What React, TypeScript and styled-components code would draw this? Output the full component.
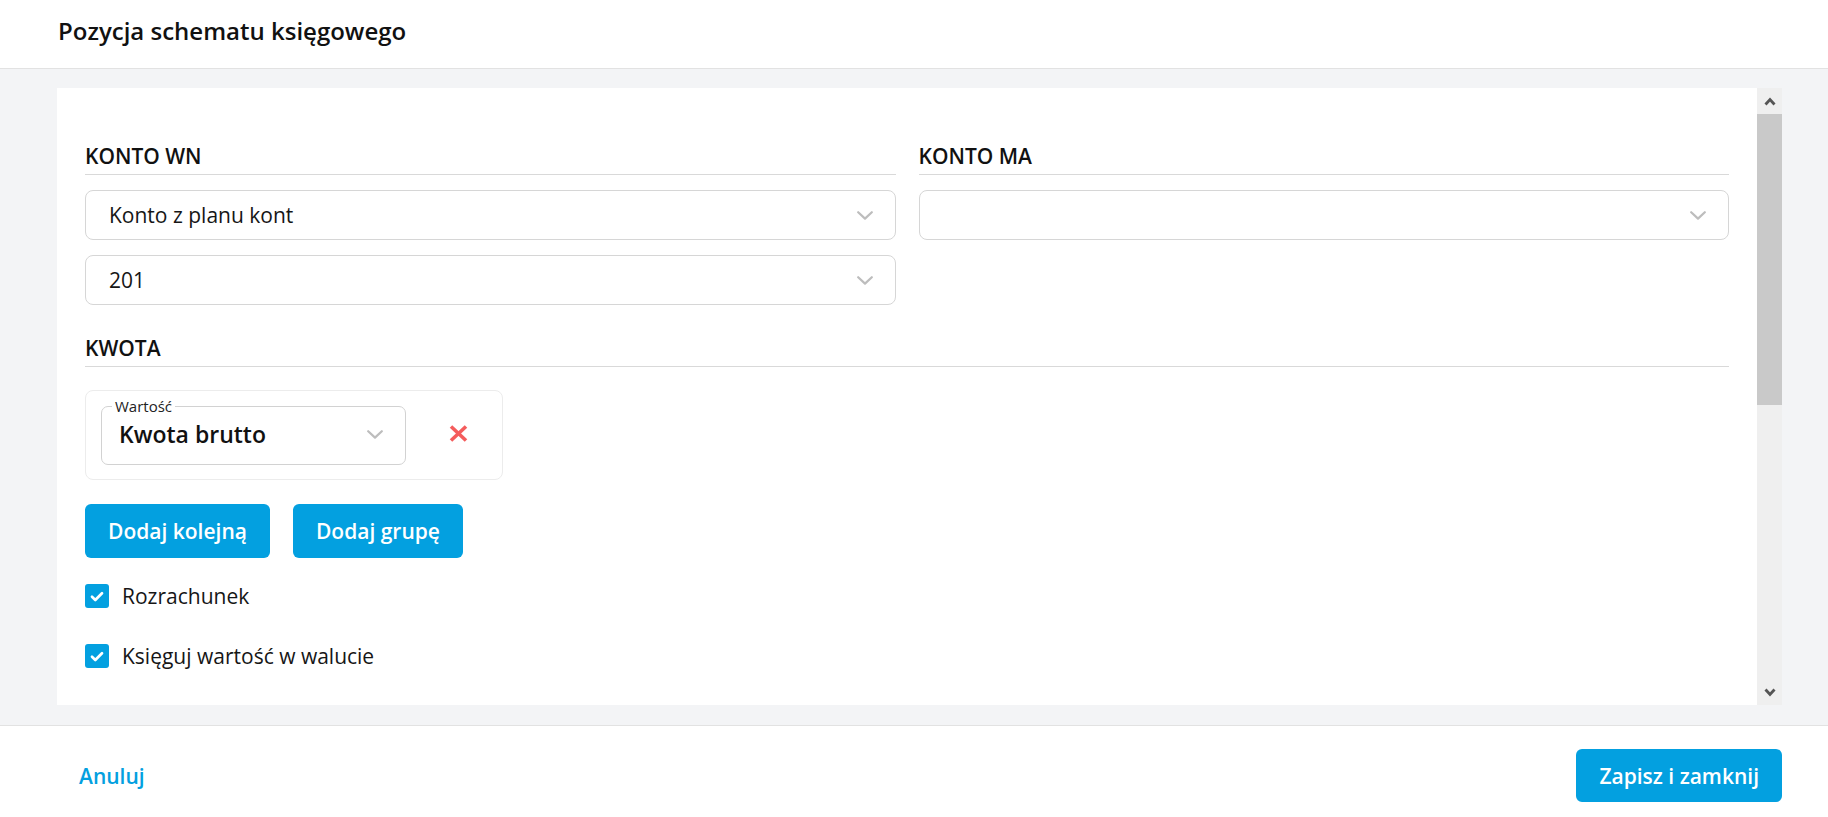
import React from "react";
import styled, { createGlobalStyle } from "styled-components";

const PRIMARY = "#03a0e0";

const GlobalStyle = createGlobalStyle`
  html, body {
    margin: 0;
    padding: 0;
    height: 100%;
    background: #ffffff;
  }
  body {
    font-family: "Open Sans", "Noto Sans", sans-serif;
    color: #161616;
  }
  * {
    box-sizing: border-box;
  }
`;

// Layout
const Page = styled.div`
  height: 100vh;
  display: flex;
  flex-direction: column;
  overflow: hidden;
`;

const Header = styled.header`
  height: 69px;
  flex-shrink: 0;
  padding: 14px 58px 0;
  border-bottom: 1px solid #e2e2e2;
  background: #fff;
`;

const Title = styled.h1`
  margin: 0;
  font-size: 24px;
  line-height: 33px;
  font-weight: 600;
  color: #111;
`;

const Body = styled.main`
  flex: 1;
  display: flex;
  min-height: 0;
  padding: 19px 46px 20px 57px;
  background: #f3f4f6;
`;

const Card = styled.div`
  flex: 1;
  background: #fff;
  overflow: hidden;
  padding: 54px 28px 0;
`;

// fake scrollbar, sits beside the card
const ScrollTrack = styled.div`
  width: 25px;
  flex-shrink: 0;
  background: #efefef;
  display: flex;
  flex-direction: column;
`;

const ScrollButton = styled.div`
  height: 26px;
  display: flex;
  align-items: center;
  justify-content: center;
  flex-shrink: 0;
`;

const ScrollThumb = styled.div`
  height: 291px;
  background: #c9c9c9;
`;

const ScrollSpacer = styled.div`
  flex: 1;
`;

// Form parts
const Columns = styled.div`
  display: grid;
  grid-template-columns: 1fr 1fr;
  column-gap: 23px;
`;

const Column = styled.div`
  display: flex;
  flex-direction: column;
  gap: 15px;
`;

const SectionLabel = styled.div<{ $gap?: number }>`
  font-size: 21px;
  line-height: 28px;
  font-weight: 600;
  color: #111;
  padding-bottom: 4px;
  border-bottom: 1px solid #d9d9d9;
  margin-top: ${(p) => p.$gap ?? 0}px;
`;

const Select = styled.div`
  height: 50px;
  border: 1px solid #d6d6d6;
  border-radius: 8px;
  padding: 0 22px 0 23px;
  display: flex;
  align-items: center;
  justify-content: space-between;
  font-size: 21px;
  color: #161616;
  background: #fff;
`;

const AmountBox = styled.div`
  width: 418px;
  margin-top: 23px;
  border: 1px solid #ececec;
  border-radius: 8px;
  padding: 5px 15px 14px;
  display: flex;
  align-items: center;
`;

const Fieldset = styled.fieldset`
  width: 305px;
  margin: 0;
  padding: 0 22px 15px 10px;
  border: 1px solid #d2d2d2;
  border-radius: 7px;
  min-width: 0;
`;

const Legend = styled.legend`
  padding: 0 3px;
  font-size: 15px;
  line-height: 20px;
  color: #222;
`;

const FieldRow = styled.div`
  display: flex;
  align-items: center;
  justify-content: space-between;
  padding: 3px 0 0 7px;
  font-size: 23px;
  line-height: 30px;
  font-weight: 600;
  color: #111;
`;

const RemoveButton = styled.button`
  margin-left: 43px;
  padding: 0;
  border: 0;
  background: none;
  display: flex;
  align-items: center;
  margin-top: 6px;
  cursor: pointer;
`;

const ButtonRow = styled.div`
  display: flex;
  gap: 23px;
  margin-top: 24px;
`;

const PrimaryButton = styled.button<{ $height?: number }>`
  height: ${(p) => p.$height ?? 54}px;
  padding: 0 23px;
  border: 0;
  border-radius: 6px;
  background: ${PRIMARY};
  color: #fff;
  font-family: inherit;
  font-size: 21px;
  font-weight: 600;
  cursor: pointer;
`;

const CheckRow = styled.label<{ $gap: number }>`
  display: flex;
  align-items: center;
  gap: 13px;
  margin-top: ${(p) => p.$gap}px;
  font-size: 21px;
  line-height: 24px;
  color: #161616;
`;

const CheckBox = styled.span`
  width: 24px;
  height: 24px;
  border-radius: 3px;
  background: ${PRIMARY};
  display: flex;
  align-items: center;
  justify-content: center;
  flex-shrink: 0;
`;

const Footer = styled.footer`
  height: 92px;
  flex-shrink: 0;
  border-top: 1px solid #e2e2e2;
  padding: 23px 46px 0 57px;
  display: flex;
  align-items: flex-start;
  justify-content: space-between;
  background: #fff;
`;

const TextButton = styled.button`
  height: 53px;
  padding: 0 22px;
  border: 0;
  background: none;
  color: ${PRIMARY};
  font-family: inherit;
  font-size: 21px;
  font-weight: 600;
  cursor: pointer;
`;

// Icons
const Chevron = ({ color = "#bdbdbd" }: { color?: string }) => (
  <svg width="16" height="9" viewBox="0 0 16 9" fill="none">
    <polyline points="1.2,1.2 8,7.6 14.8,1.2" stroke={color} strokeWidth="2.2" strokeLinecap="round" strokeLinejoin="round" />
  </svg>
);

const ScrollArrow = ({ up }: { up?: boolean }) => (
  <svg width="12" height="9" viewBox="0 0 12 9" fill="none">
    <polyline
      points={up ? "1.5,7.5 6,2.5 10.5,7.5" : "1.5,1.5 6,6.5 10.5,1.5"}
      stroke="#555"
      strokeWidth="2.8"
    />
  </svg>
);

const CrossIcon = () => (
  <svg width="19" height="17" viewBox="0 0 19 17" fill="none">
    <line x1="2" y1="1.5" x2="17" y2="15.5" stroke="#f45c5c" strokeWidth="3.6" />
    <line x1="17" y1="1.5" x2="2" y2="15.5" stroke="#f45c5c" strokeWidth="3.6" />
  </svg>
);

const CheckIcon = () => (
  <svg width="14" height="11" viewBox="0 0 14 11" fill="none">
    <polyline points="2,5.8 5.3,9 12,2.2" stroke="#fff" strokeWidth="2.7" strokeLinecap="round" strokeLinejoin="round" />
  </svg>
);

const App: React.FC = () => {
  return (
    <Page>
      <GlobalStyle />
      <Header>
        <Title>Pozycja schematu księgowego</Title>
      </Header>

      <Body>
        <Card>
          <Columns>
            <Column>
              <SectionLabel>KONTO WN</SectionLabel>
              <Select>
                <span>Konto z planu kont</span>
                <Chevron />
              </Select>
              <Select>
                <span>201</span>
                <Chevron />
              </Select>
            </Column>
            <Column>
              <SectionLabel>KONTO MA</SectionLabel>
              <Select>
                <span />
                <Chevron />
              </Select>
            </Column>
          </Columns>

          <SectionLabel $gap={29}>KWOTA</SectionLabel>

          <AmountBox>
            <Fieldset>
              <Legend>Wartość</Legend>
              <FieldRow>
                <span>Kwota brutto</span>
                <Chevron />
              </FieldRow>
            </Fieldset>
            <RemoveButton aria-label="Usuń">
              <CrossIcon />
            </RemoveButton>
          </AmountBox>

          <ButtonRow>
            <PrimaryButton>Dodaj kolejną</PrimaryButton>
            <PrimaryButton>Dodaj grupę</PrimaryButton>
          </ButtonRow>

          <CheckRow $gap={26}>
            <CheckBox>
              <CheckIcon />
            </CheckBox>
            Rozrachunek
          </CheckRow>
          <CheckRow $gap={36}>
            <CheckBox>
              <CheckIcon />
            </CheckBox>
            Księguj wartość w walucie
          </CheckRow>
        </Card>

        <ScrollTrack>
          <ScrollButton>
            <ScrollArrow up />
          </ScrollButton>
          <ScrollThumb />
          <ScrollSpacer />
          <ScrollButton>
            <ScrollArrow />
          </ScrollButton>
        </ScrollTrack>
      </Body>

      <Footer>
        <TextButton>Anuluj</TextButton>
        <PrimaryButton $height={53}>Zapisz i zamknij</PrimaryButton>
      </Footer>
    </Page>
  );
};

export default App;
